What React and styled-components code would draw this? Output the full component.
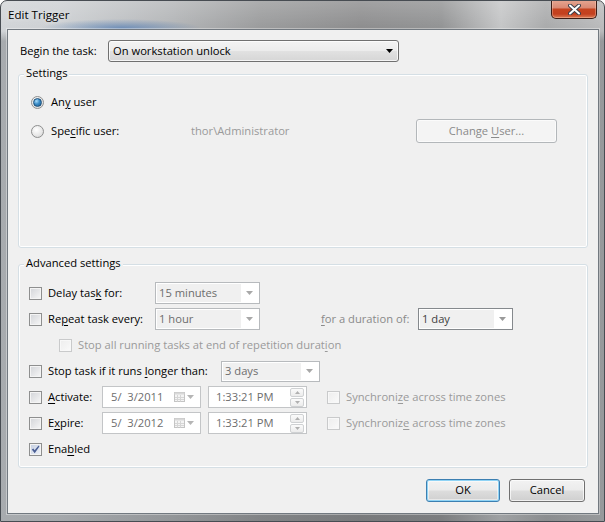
import React from 'react';
import styled, { createGlobalStyle, css } from 'styled-components';

const FONT = `"Open Sans", "Noto Sans", "DejaVu Sans", sans-serif`;

const GlobalStyle = createGlobalStyle`
  html, body { margin: 0; padding: 0; background: #ffffff; }
  body { font-family: ${FONT}; font-size: 11.2px; color: #000; }
  * { box-sizing: border-box; }
`;

const lift = css`
  padding-bottom: 2px;
`;

const Window = styled.div`
  width: 605px;
  height: 522px;
  display: flex;
  flex-direction: column;
  border: 1px solid #474c52;
  border-radius: 7px 7px 0 0;
  overflow: hidden;
  background:
    radial-gradient(ellipse 80px 9px at 120px 27px, rgba(60, 110, 175, 0.6), rgba(60, 110, 175, 0) 100%),
    linear-gradient(180deg, rgba(255, 255, 255, 0.18) 0px, rgba(255, 255, 255, 0) 26px, rgba(70, 75, 80, 0) 30px, rgba(70, 75, 80, 0.3) 40px),
    linear-gradient(90deg, #d2d5d8 0px, #cdd0d3 60px, #b4b6b8 170px, #9b9c9d 260px, #8e8e8f 360px, #939495 440px, #c5c6c7 500px, #aaabac 545px, #bbbcbd 605px);
`;

const TitleBar = styled.div`
  height: 28px;
  flex-shrink: 0;
  display: flex;
  justify-content: space-between;
  align-items: flex-start;
  padding: 0 7px 0 7px;
`;

const TitleText = styled.div`
  padding-top: 6px;
  line-height: 16px;
  font-size: 11.6px;
  color: #000;
  text-shadow: 0 0 5px rgba(255, 255, 255, 0.7);
`;

const CloseButton = styled.div`
  width: 46px;
  height: 19px;
  margin-top: -1px;
  display: flex;
  align-items: center;
  justify-content: center;
  border: 1px solid #3d1d16;
  border-top: none;
  border-radius: 0 0 5px 5px;
  background: linear-gradient(180deg, #e6a792 0%, #da8a74 42%, #c5431f 52%, #c3401f 78%, #dc7b55 100%);
  box-shadow: inset 0 0 0 1px rgba(255, 220, 200, 0.35);
`;

const Client = styled.div`
  flex: 1;
  margin: 0 5px 7px 6px;
  border: 1px solid #727980;
  box-shadow: 0 0 0 1px rgba(255, 255, 255, 0.35);
  background: #f0f0f0;
  padding: 10px 10px 0 10px;
  display: flex;
  flex-direction: column;
`;

const TopRow = styled.div`
  height: 22px;
  display: flex;
  align-items: center;
`;

const TopLabel = styled.div`
  width: 90px;
  padding-left: 2px;
  ${lift}
`;

const MainCombo = styled.div`
  width: 291px;
  height: 22px;
  display: flex;
  align-items: center;
  justify-content: space-between;
  padding: 0 5px 0 4px;
  border: 1px solid #707070;
  border-radius: 3px;
  background: linear-gradient(180deg, #f3f3f3 0%, #ececec 48%, #e1e1e1 52%, #d6d6d6 100%);
  box-shadow: inset 0 0 0 1px rgba(255, 255, 255, 0.75);
`;

const MainComboText = styled.span`
  ${lift}
`;

const GroupBox = styled.div`
  position: relative;
  margin-top: ${p => p.$top}px;
  height: ${p => p.$height}px;
  border: 1px solid #d5dfe5;
  border-radius: 3px;
  box-shadow: inset 0 0 0 1px #ffffff;
  padding: ${p => p.$pad};
  display: flex;
  flex-direction: column;
`;

const GroupTitle = styled.div`
  position: absolute;
  top: -10px;
  left: 5px;
  padding: 0 2px;
  line-height: 16px;
  background: #f0f0f0;
`;

const RadioRow = styled.div`
  height: 24px;
  display: flex;
  align-items: center;
  margin-top: ${p => p.$top || 0}px;
`;

const Radio = styled.span`
  width: 13px;
  height: 13px;
  flex-shrink: 0;
  border-radius: 50%;
  border: 1px solid #8e8f8f;
  display: flex;
  align-items: center;
  justify-content: center;
  background: radial-gradient(circle at 40% 35%, #ffffff 0%, #e6e6e6 60%, #cfcfcf 100%);
  &::after {
    content: '';
    display: ${p => (p.$on ? 'block' : 'none')};
    width: 7px;
    height: 7px;
    border-radius: 50%;
    border: 1px solid #1d4f78;
    background: radial-gradient(circle at 35% 30%, #a9ddfa 0%, #3a8cc8 45%, #1a5b8d 100%);
  }
`;

const RadioLabel = styled.span`
  margin-left: 7px;
  width: ${p => (p.$w ? `${p.$w}px` : 'auto')};
  flex-shrink: 0;
  ${lift}
`;

const Muted = styled.span`
  color: ${p => p.$tone || '#9a9a9a'};
  width: ${p => (p.$w ? `${p.$w}px` : 'auto')};
  margin-left: ${p => p.$ml || 0}px;
  flex-shrink: 0;
  white-space: pre;
  ${lift}
`;

const Button = styled.div`
  width: ${p => p.$w}px;
  height: ${p => p.$h}px;
  flex-shrink: 0;
  display: flex;
  align-items: center;
  justify-content: center;
  padding-bottom: 2px;
  border: 1px solid #707070;
  border-radius: 3px;
  background: linear-gradient(180deg, #f2f2f2 0%, #ebebeb 48%, #dddddd 52%, #cfcfcf 100%);
  box-shadow: inset 0 0 0 1px rgba(255, 255, 255, 0.7);
  color: #000;
  ${p =>
    p.$default &&
    css`
      border-color: #3c7fb1;
      box-shadow: inset 0 0 0 1px #8fd3f5, inset 0 0 0 2px rgba(255, 255, 255, 0.5);
    `}
  ${p =>
    p.$disabled &&
    css`
      border-color: #b3b7ba;
      background: #f4f4f4;
      color: #8a8a8a;
      box-shadow: inset 0 0 0 1px #fbfbfb;
    `}
`;

const AdvRow = styled.div`
  height: ${p => p.$h || 26}px;
  display: flex;
  align-items: center;
  padding-left: ${p => p.$indent || 0}px;
`;

const Check = styled.span`
  width: 13px;
  height: 13px;
  flex-shrink: 0;
  display: flex;
  align-items: center;
  justify-content: center;
  margin-left: ${p => p.$ml || 0}px;
  border: 1px solid ${p => (p.$disabled ? '#c9cacb' : '#8e8f8f')};
  background: ${p =>
    p.$disabled
      ? 'linear-gradient(135deg, #ededed, #fafafa)'
      : p.$checked
      ? 'linear-gradient(135deg, #c3cde0, #f1f4f9)'
      : 'linear-gradient(135deg, #d2d4d8, #f7f7f7)'};
  box-shadow: inset 0 0 0 1px ${p => (p.$disabled ? '#f8f8f8' : '#f4f4f4')};
`;

const CheckText = styled.span`
  margin-left: 6px;
  width: ${p => (p.$w ? `${p.$w}px` : 'auto')};
  flex-shrink: 0;
  white-space: nowrap;
  color: ${p => (p.$disabled ? '#9a9a9a' : '#000')};
  ${lift}
`;

const Combo = styled.div`
  width: ${p => p.$w}px;
  height: ${p => p.$h || 22}px;
  flex-shrink: 0;
  display: flex;
  align-items: stretch;
  padding: 1px;
  border: 1px solid ${p => (p.$dark ? '#85898d' : '#b7babd')};
  background: #ffffff;
`;

const ComboValue = styled.div`
  flex: 1;
  display: flex;
  align-items: center;
  padding-left: 2px;
  background: #f0f0f0;
  color: ${p => (p.$dark ? '#3f3f3f' : '#6d6d6d')};
  ${lift}
`;

const ComboArrow = styled.div`
  width: 17px;
  display: flex;
  align-items: center;
  justify-content: center;
`;

const Field = styled.div`
  width: 99px;
  height: 22px;
  flex-shrink: 0;
  margin-left: ${p => p.$ml || 0}px;
  display: flex;
  align-items: center;
  justify-content: space-between;
  border: 1px solid #c3c5c7;
  background: #ffffff;
  color: #6d6d6d;
  padding: ${p => p.$pad};
  white-space: pre;
`;

const FieldText = styled.span`
  ${lift}
`;

const CalIcon = styled.span`
  display: flex;
  align-items: center;
  gap: 2px;
`;

const Spin = styled.span`
  display: flex;
  flex-direction: column;
  gap: 1px;
`;

const SpinBtn = styled.span`
  width: 14px;
  height: 9px;
  display: flex;
  align-items: center;
  justify-content: center;
  border: 1px solid #cfd1d3;
  border-radius: 2px;
  background: linear-gradient(180deg, #fbfbfb, #ececec);
`;

const ButtonRow = styled.div`
  margin-top: 11px;
  margin-right: 3px;
  display: flex;
  justify-content: flex-end;
  gap: 9px;
`;

const Key = styled.u`
  text-decoration: underline;
  text-underline-offset: 1.5px;
  text-decoration-thickness: 1px;
`;

const Arrow = ({ color = '#000' }) => (
  <svg width="7" height="4" viewBox="0 0 7 4">
    <path d="M0 0H7L3.5 4Z" fill={color} />
  </svg>
);

const CheckBox = ({ checked, disabled, ml }) => (
  <Check $checked={checked} $disabled={disabled} $ml={ml}>
    {checked && (
      <svg width="9" height="9" viewBox="0 0 9 9">
        <path d="M0.8 4.6 L2.4 3.4 L3.6 5.2 L7.6 0.6 L8.4 1.6 L3.7 8.2 Z" fill="#4a5e94" />
      </svg>
    )}
  </Check>
);

const ComboBox = ({ w, h, dark, children }) => (
  <Combo $w={w} $h={h} $dark={dark}>
    <ComboValue $dark={dark}>{children}</ComboValue>
    <ComboArrow>
      <Arrow color={dark ? '#9a9a9a' : '#a8a8a8'} />
    </ComboArrow>
  </Combo>
);

const DateField = ({ value }) => (
  <Field $pad="0 6px 0 8px" $ml={0}>
    <FieldText>{value}</FieldText>
    <CalIcon>
      <svg width="11" height="10" viewBox="0 0 11 10">
        <rect x="0.5" y="0.5" width="10" height="9" fill="#f4f4f4" stroke="#c4c4c4" />
        <rect x="0.5" y="0.5" width="10" height="2" fill="#d8d8d8" />
        <path d="M3.5 3V9.5M6.5 3V9.5M1 5.5H10M1 7.5H10" stroke="#d6d6d6" strokeWidth="1" />
      </svg>
      <Arrow color="#b5b5b5" />
    </CalIcon>
  </Field>
);

const TimeField = () => (
  <Field $pad="0 2px 0 7px" $ml={7}>
    <FieldText>1:33:21 PM</FieldText>
    <Spin>
      <SpinBtn>
        <svg width="5" height="3" viewBox="0 0 5 3">
          <path d="M0 3H5L2.5 0Z" fill="#b0b0b0" />
        </svg>
      </SpinBtn>
      <SpinBtn>
        <svg width="5" height="3" viewBox="0 0 5 3">
          <path d="M0 0H5L2.5 3Z" fill="#b0b0b0" />
        </svg>
      </SpinBtn>
    </Spin>
  </Field>
);

export default function App() {
  return (
    <>
      <GlobalStyle />
      <Window>
        <TitleBar>
          <TitleText>Edit Trigger</TitleText>
          <CloseButton>
            <svg width="13" height="11" viewBox="0 0 13 11">
              <path d="M2 1.5L11 9.5M11 1.5L2 9.5" stroke="#3b3f4a" strokeWidth="4" strokeLinecap="round" />
              <path d="M2 1.5L11 9.5M11 1.5L2 9.5" stroke="#ffffff" strokeWidth="2" strokeLinecap="round" />
            </svg>
          </CloseButton>
        </TitleBar>
        <Client>
          <TopRow>
            <TopLabel>Begin the task:</TopLabel>
            <MainCombo>
              <MainComboText>On workstation unlock</MainComboText>
              <Arrow />
            </MainCombo>
          </TopRow>

          <GroupBox $top={12} $height={174} $pad="15px 0 0 12px">
            <GroupTitle>Settings</GroupTitle>
            <RadioRow>
              <Radio $on />
              <RadioLabel>
                An<Key>y</Key> user
              </RadioLabel>
            </RadioRow>
            <RadioRow $top={5}>
              <Radio />
              <RadioLabel $w={140}>
                Spe<Key>c</Key>ific user:
              </RadioLabel>
              <Muted $w={225}>thor\Administrator</Muted>
              <Button $w={141} $h={24} $disabled>
                <span>
                  Change <Key>U</Key>ser...
                </span>
              </Button>
            </RadioRow>
          </GroupBox>

          <GroupBox $top={16} $height={204} $pad="15px 0 0 10px">
            <GroupTitle>Advanced settings</GroupTitle>
            <AdvRow>
              <CheckBox />
              <CheckText $w={107}>
                Delay tas<Key>k</Key> for:
              </CheckText>
              <ComboBox w={105}>15 minutes</ComboBox>
            </AdvRow>
            <AdvRow>
              <CheckBox />
              <CheckText $w={107}>
                Re<Key>p</Key>eat task every:
              </CheckText>
              <ComboBox w={105}>1 hour</ComboBox>
              <Muted $w={97} $ml={61} $tone="#8a8a8a">
                <Key>f</Key>or a duration of:
              </Muted>
              <ComboBox w={95} dark>
                1 day
              </ComboBox>
            </AdvRow>
            <AdvRow $indent={30}>
              <CheckBox disabled />
              <CheckText $disabled>
                Stop all running tasks at end of repetition durat<Key>i</Key>on
              </CheckText>
            </AdvRow>
            <AdvRow>
              <CheckBox />
              <CheckText $w={173}>
                Stop task if it runs <Key>l</Key>onger than:
              </CheckText>
              <ComboBox w={99} h={21}>
                3 days
              </ComboBox>
            </AdvRow>
            <AdvRow>
              <CheckBox />
              <CheckText $w={54}>
                <Key>A</Key>ctivate:
              </CheckText>
              <DateField value={'5/  3/2011'} />
              <TimeField />
              <CheckBox disabled ml={20} />
              <CheckText $disabled>
                Synchroni<Key>z</Key>e across time zones
              </CheckText>
            </AdvRow>
            <AdvRow>
              <CheckBox />
              <CheckText $w={54}>
                E<Key>x</Key>pire:
              </CheckText>
              <DateField value={'5/  3/2012'} />
              <TimeField />
              <CheckBox disabled ml={20} />
              <CheckText $disabled>
                Synchroniz<Key>e</Key> across time zones
              </CheckText>
            </AdvRow>
            <AdvRow>
              <CheckBox checked />
              <CheckText>
                Ena<Key>b</Key>led
              </CheckText>
            </AdvRow>
          </GroupBox>

          <ButtonRow>
            <Button $w={74} $h={23} $default>
              OK
            </Button>
            <Button $w={76} $h={23}>
              Cancel
            </Button>
          </ButtonRow>
        </Client>
      </Window>
    </>
  );
}
